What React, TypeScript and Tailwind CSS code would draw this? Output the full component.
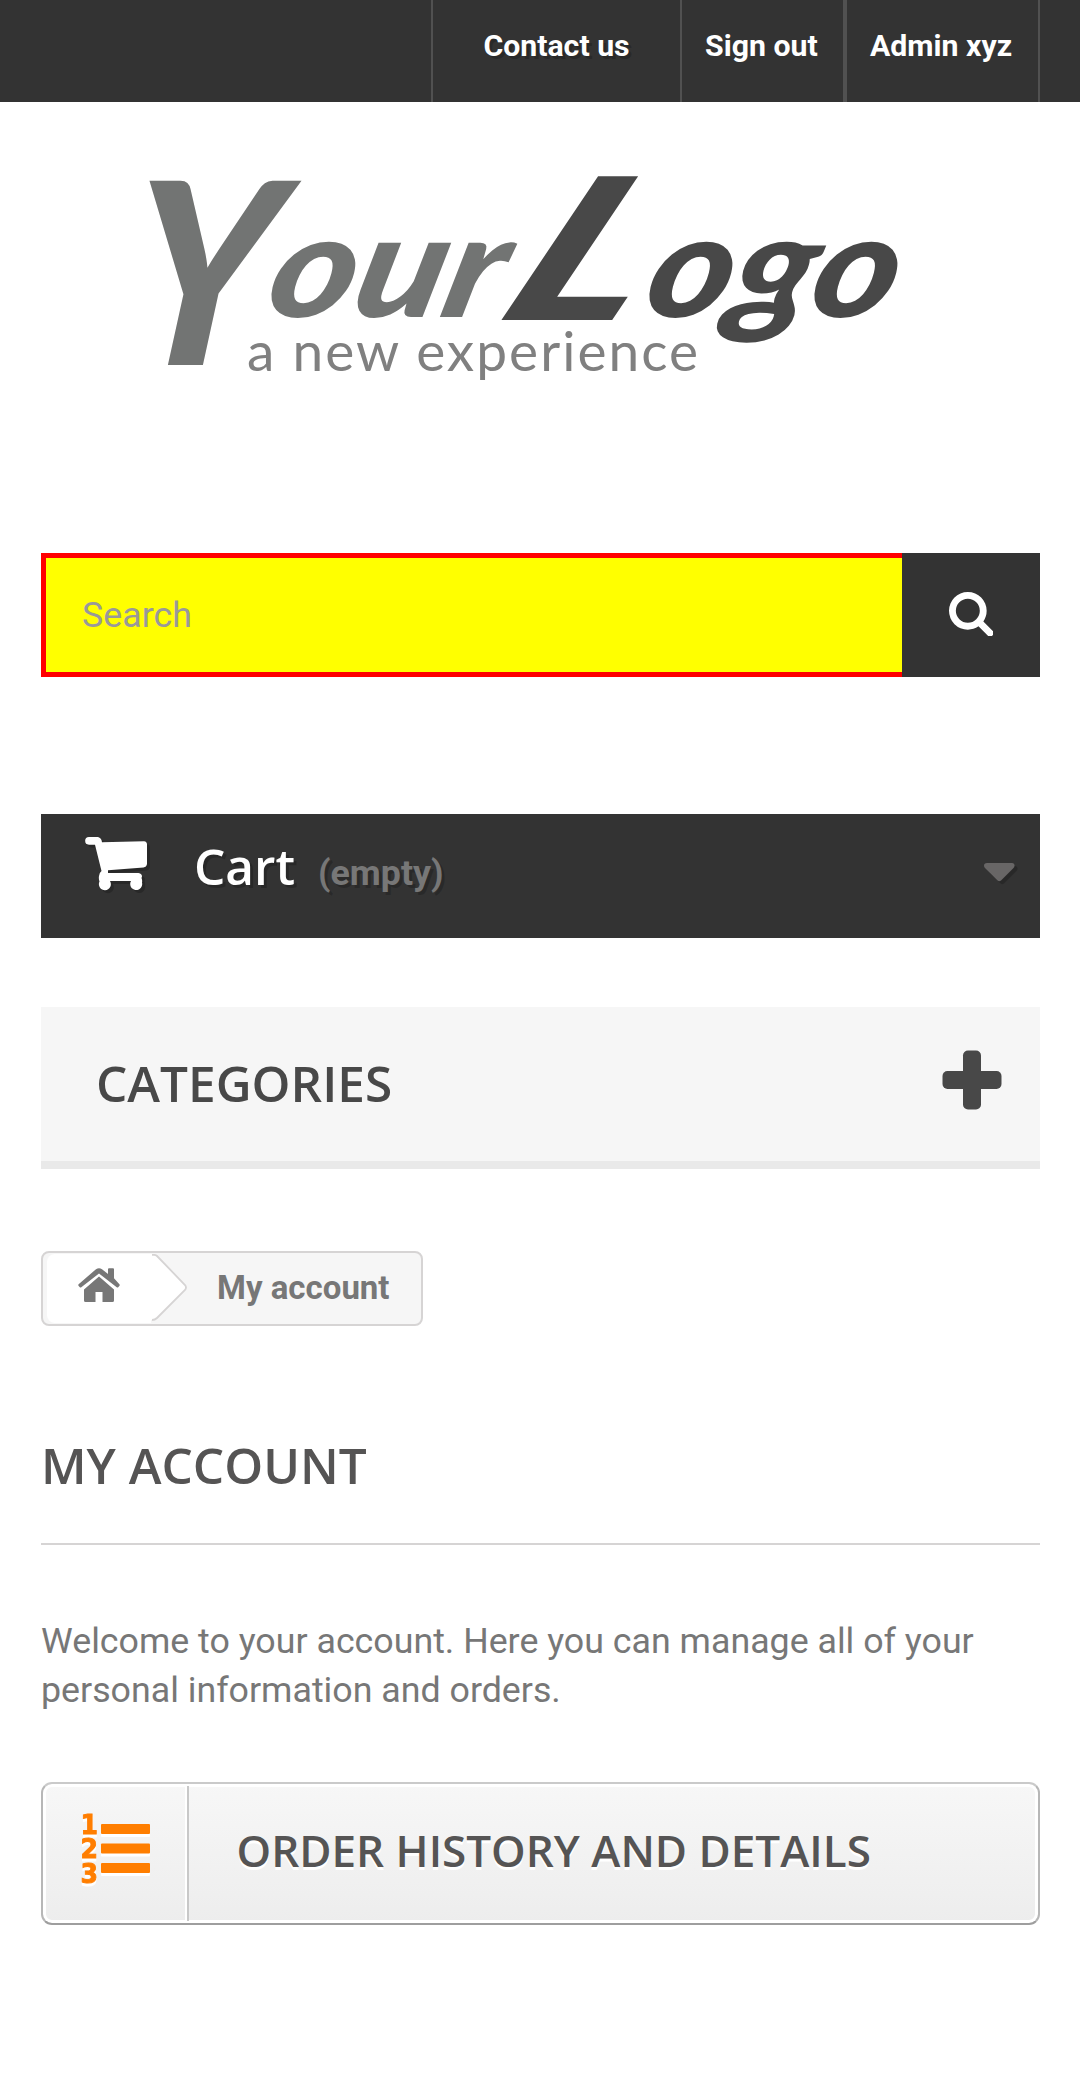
import React from "react";

function Logo() {
  return (
    <svg className="block h-[240px] w-[800px] overflow-visible" viewBox="120 160 800 240" role="img" aria-label="Your Logo, a new experience">
      <g fontFamily="Lato, sans-serif" fontWeight={900} fontStyle="italic">
        <g fill="#727473">
          <text transform="matrix(0.95 0 -0.1 1 120 365)" fontSize="254">Y</text>
          <text transform="matrix(1 0 -0.25 1 262 317)" fontSize="144" textLength="234" lengthAdjust="spacingAndGlyphs">our</text>
        </g>
        <g fill="#484848">
          <text transform="matrix(1.4 0 -0.5 1 492 320)" fontSize="198">L</text>
          <text transform="matrix(1 0 -0.25 1 640 317)" fontSize="144" textLength="250" lengthAdjust="spacingAndGlyphs">ogo</text>
        </g>
      </g>
      <text x="247" y="371" fill="#808080" fontFamily="Lato, sans-serif" fontSize="55" textLength="451">
        a new experience
      </text>
    </svg>
  );
}

function SearchIcon() {
  return (
    <svg className="h-[44.500px] w-[44.500px]" viewBox="0 128 1664 1664" fill="#fff">
      <path d="M1152 832q0-185-131.5-316.5t-316.5-131.5-316.5 131.5-131.5 316.5 131.5 316.5 316.5 131.5 316.5-131.5 131.5-316.5zm512 832q0 52-38 90t-90 38q-54 0-90-38l-343-342q-179 124-399 124-143 0-273.5-55.5t-225-150-150-225-55.5-273.5 55.5-273.5 150-225 225-150 273.5-55.5 273.5 55.5 225 150 150 225 55.5 273.5q0 220-124 399l343 343q37 37 37 90z" />
    </svg>
  );
}

function CartIcon() {
  return (
    <svg className="mt-[23px] h-[54px] w-[63px] overflow-visible drop-shadow-[3px_3px_0_rgba(0,0,0,0.2)]" viewBox="0 0 63 54" fill="#fff">
      <path d="M4 0H13Q16.500 1 17 5.300L59 4.200Q62 4.500 62 7.500V27Q61.500 30 58.500 30.500L23 33.200V36H53.500Q57 36.500 57 39.500L56.500 41Q57.500 43 57 45.500A6 6 0 1 1 46 44H25A6 6 0 1 1 14.500 44.500Q13.500 42 14 39Q14 36 16.500 34L10 7.700H4A3.850 3.850 0 0 1 4 0Z" />
    </svg>
  );
}

function CaretIcon() {
  return (
    <svg className="mt-[49px] h-[19px] w-[31px] overflow-visible drop-shadow-[3px_3px_0_rgba(0,0,0,0.2)]" viewBox="0 0 31 19" fill="#686666">
      <path d="M3 0H28Q30.500 0 30.500 2.500Q30.500 4 29.500 5L17 17.500Q15.300 19 13.600 17.500L1 5Q0 4 0 2.500Q0 0 3 0Z" />
    </svg>
  );
}

function HomeIcon() {
  return (
    <svg className="h-[34px] w-[42px]" viewBox="0 0 42 34" fill="#777">
      <path d="M6 21.500V32.500Q6 34 7.500 34H17.500V24H24.500V34H34.500Q36 34 36 32.500V21.500L21 8.500Z" />
      <path d="M36 10.300V1.300Q36 .3 35 .3H31Q30 .3 30 1.300V6L24 1.200Q21 -.8 18 1.200L.6 16.200Q-.1 17 .5 17.700L1.800 19.200Q2.600 19.800 3.300 19.200L21 5.500L38.700 19.200Q39.500 19.800 40.200 19.200L41.500 17.700Q42.100 17 41.400 16.200Z" />
    </svg>
  );
}

function OrderedListIcon() {
  return (
    <svg className="h-[70px] w-[70px] overflow-visible drop-shadow-[0_3px_0_#fff]" viewBox="0 0 70 70" fill="#ff7e00">
      <g fontFamily="'DejaVu Sans', sans-serif" fontWeight={700} fontSize="26" stroke="#ff7e00" strokeWidth="0.9">
        <text x="-1.500" y="19.700" textLength="17.5" lengthAdjust="spacingAndGlyphs">1</text>
        <text x="-1.500" y="44" textLength="17.5" lengthAdjust="spacingAndGlyphs">2</text>
        <text x="-1.500" y="68.500" textLength="17.5" lengthAdjust="spacingAndGlyphs">3</text>
      </g>
      <rect x="19" y="10" width="49" height="10" rx="1" />
      <rect x="19" y="29.500" width="49" height="10" rx="1" />
      <rect x="19" y="49" width="49" height="10" rx="1" />
    </svg>
  );
}

export default function App() {
  return (
    <div className="h-[2082px] w-[1080px] overflow-hidden bg-white font-[Roboto,sans-serif] text-[35.75px] leading-[49px] text-[#777]">
      <nav className="flex h-[102px] justify-end bg-[#333] pr-10 text-[30.25px] font-bold leading-[50px] text-white">
        <a className="w-[251px] border-x-2 border-[#515151] pt-[21px] text-center [text-shadow:3px_3px_0_rgba(0,0,0,0.2)]">Contact us</a>
        <a className="w-[163px] border-r-2 border-[#515151] pl-[23px] pt-[21px]">Sign out</a>
        <a className="w-[195px] border-x-2 border-[#515151] pl-[23px] pt-[21px]">Admin xyz</a>
      </nav>

      <header className="px-[41px]">
        <div className="ml-[79px] pt-[58px]">
          <Logo />
        </div>

        <form className="mt-[153px] flex h-[124px] w-[999px]">
          <div className="flex w-[861px] items-center border-y-[5px] border-l-[5px] border-[#f00] bg-[#ff0] pl-9 pt-px text-[#999]">Search</div>
          <button type="button" className="flex w-[138px] items-start justify-center bg-[#333] pt-[38.500px]">
            <SearchIcon />
          </button>
        </form>

        <div className="mt-[137px] flex h-[124px] w-[999px] bg-[#333] pl-11 pr-[25px] [text-shadow:3px_3px_0_rgba(0,0,0,0.2)]">
          <CartIcon />
          <div className="ml-[46px] flex flex-1 items-baseline pt-[18px]">
            <span className="font-['Open_Sans',sans-serif] text-[49.500px] font-semibold leading-[68px] text-white">Cart</span>
            <span className="ml-[23px] font-bold">(empty)</span>
          </div>
          <CaretIcon />
        </div>
      </header>

      <main className="px-[41px]">
        <section className="mt-[69px] flex h-[162px] w-[999px] items-start justify-between border-b-8 border-[#e9e9e9] bg-[#f6f6f6] pl-[55px] pr-[38px]">
          <h2 className="pt-[42px] font-['Open_Sans',sans-serif] text-[49.500px] font-semibold leading-[68px] text-[#484848]">CATEGORIES</h2>
          <svg className="mt-[43px] h-[60px] w-[60px]" viewBox="0 0 60 60" fill="#484848">
            <rect x="21" y="0.500" width="18" height="59" rx="5" />
            <rect x="0.500" y="21" width="59" height="18" rx="5" />
          </svg>
        </section>

        <div className="mt-[82px] flex h-[75px] w-[382px] rounded-lg border-2 border-[#d6d4d4] bg-[#f6f6f6] text-[33px] font-bold">
          <div className="relative ml-1 mt-px flex h-[69px] w-[104px] justify-center rounded-l-lg bg-white pt-[14px]">
            <HomeIcon />
            <svg className="absolute left-[104px] top-0 h-[69px] w-9" viewBox="0 0 36 69">
              <path d="M0 0H3Q5 1 6 2L34 31Q36 33.500 34 36L6 64Q4 66 0 66V69Z" fill="#fff" />
              <path d="M1 .8H3Q5 1 6 2L34 31Q36 33.500 34 36L6 64Q4 66 1 66" fill="none" stroke="#d6d4d4" strokeWidth="1.800" />
            </svg>
          </div>
          <span className="ml-[66px] mt-[10px]">My account</span>
        </div>

        <h1 className="mt-[105px] h-[114px] w-[999px] border-b-2 border-[#d6d4d4] font-['Open_Sans',sans-serif] text-[49.500px] font-semibold leading-[68px] text-[#555454]">MY ACCOUNT</h1>

        <p className="mt-[72px] w-[999px]">Welcome to your account. Here you can manage all of your personal information and orders.</p>

        <a className="mt-[67px] flex h-[143px] w-[999px] rounded-[11px] border-2 border-x-[#b7b7b7] border-b-[#9e9e9e] border-t-[#cacaca] bg-linear-to-b from-[#f7f7f7] to-[#ededed] shadow-[inset_0_0_0_3px_#fff]">
          <span className="mt-0.5 flex h-[135px] w-[146px] border-r-2 border-[#c8c8c8] pl-[39px] pt-7 shadow-[inset_-2px_0_0_#fff]">
            <OrderedListIcon />
          </span>
          <span className="ml-[47.500px] pt-[36px] font-['Open_Sans',sans-serif] text-[44px] font-semibold leading-[60px] text-[#555454] [text-shadow:0_3px_0_#fff]">ORDER HISTORY AND DETAILS</span>
        </a>
      </main>
    </div>
  );
}
